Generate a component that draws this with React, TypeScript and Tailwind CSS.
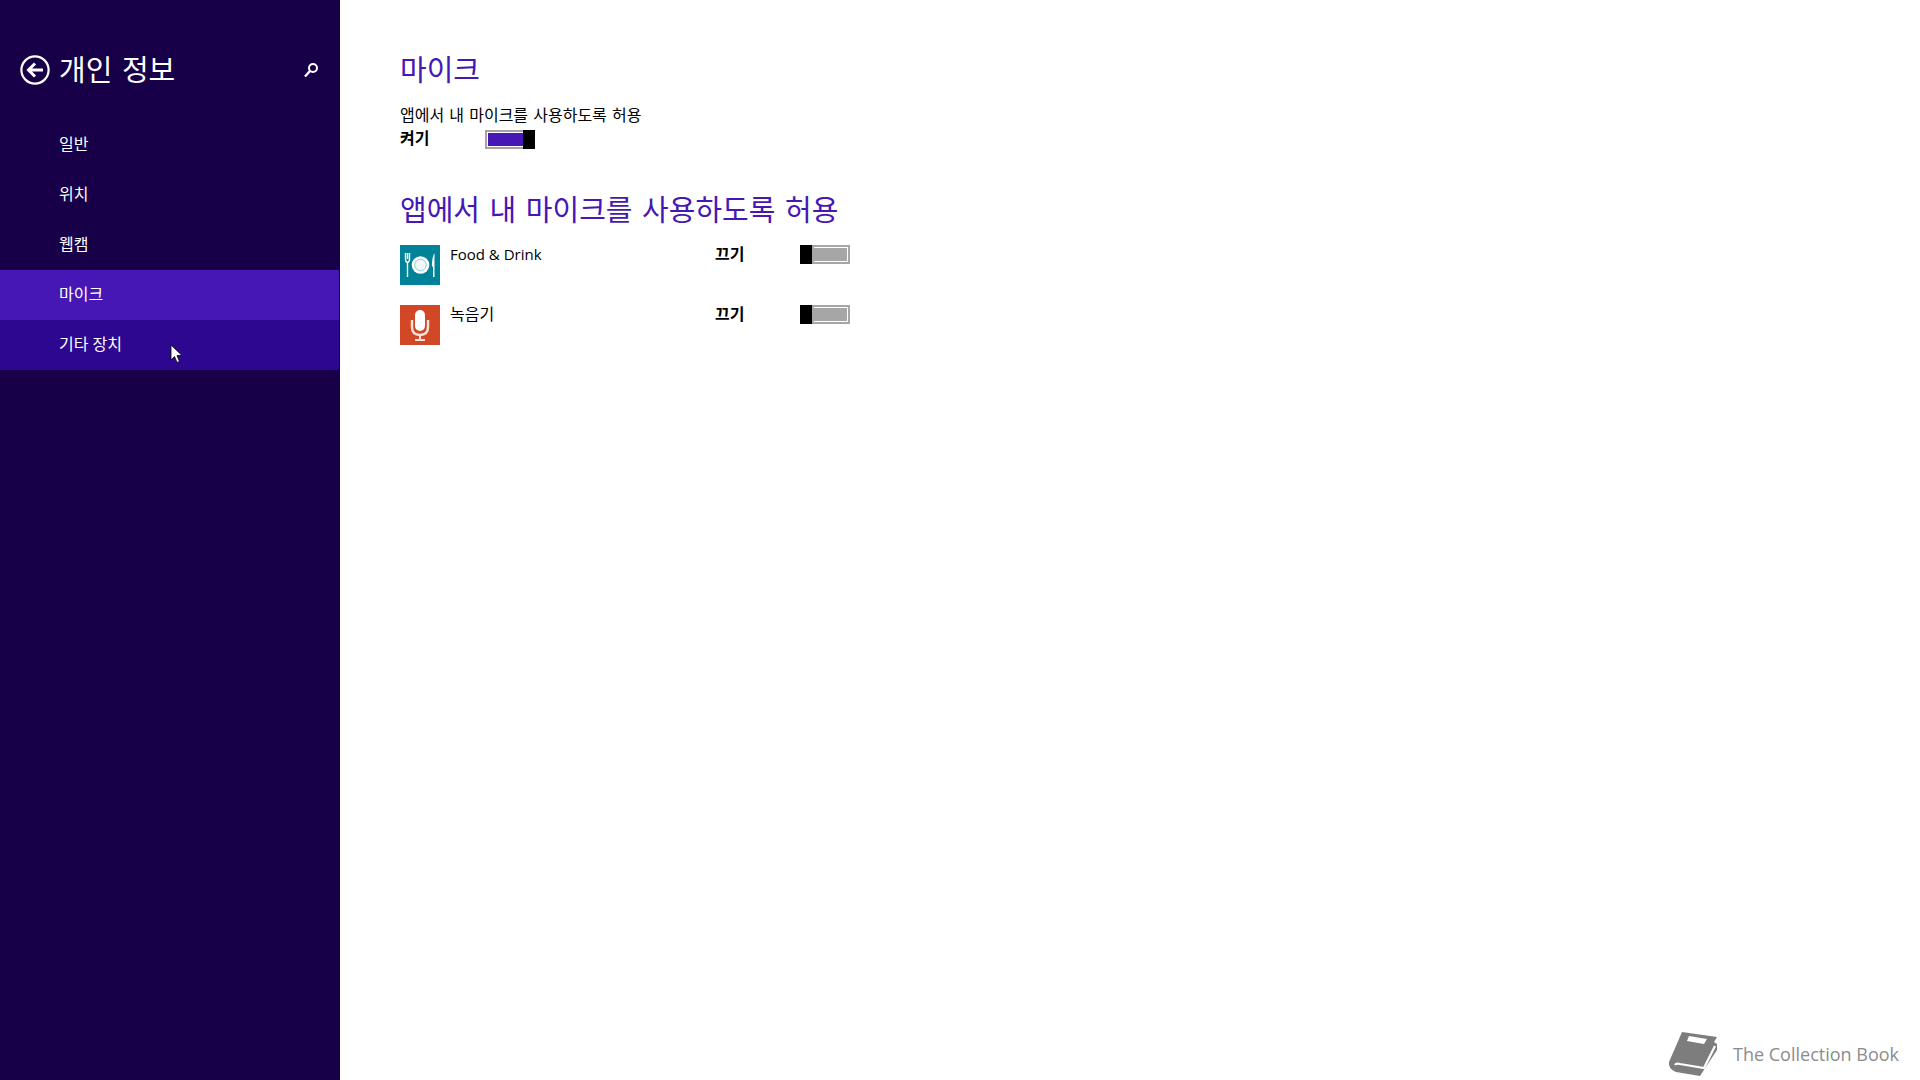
const FONT = "font-['Open_Sans','Noto_Sans_CJK_KR',sans-serif]";

const navItems = [
  { label: "일반", bg: "" },
  { label: "위치", bg: "" },
  { label: "웹캠", bg: "" },
  { label: "마이크", bg: "bg-[#4617b4]" },
  { label: "기타 장치", bg: "bg-[#2e0791]" },
];

function BackIcon() {
  return (
    <svg width="30" height="30" viewBox="0 0 30 30" fill="none" stroke="white" className="shrink-0">
      <circle cx="15" cy="15" r="13.6" strokeWidth="2.2" />
      <path d="M23 15H9M15 8.5L8.5 15L15 21.5" strokeWidth="3" />
    </svg>
  );
}

function SearchIcon() {
  return (
    <svg width="16" height="16" viewBox="0 0 16 16" fill="none" stroke="white">
      <circle cx="10" cy="6" r="4" strokeWidth="2" />
      <path d="M7 9L2 14.5" strokeWidth="2.4" />
    </svg>
  );
}

function PlateIcon() {
  return (
    <svg width="40" height="40" viewBox="0 0 40 40" fill="none" className="shrink-0 bg-[#008299]">
      <path d="M5.5 8V14Q5.5 17 7.5 17.5V32M7.5 8V14M9.5 8V14Q9.5 17 7.5 17.5" stroke="white" strokeWidth="1.4" />
      <circle cx="20.5" cy="20" r="8.8" fill="white" />
      <circle cx="20.5" cy="20" r="5.8" fill="#f2f8fa" stroke="#86c4d0" strokeWidth="0.9" />
      <path d="M34.5 8Q31.5 13 32 21L33 22V32H34.5Z" fill="white" />
    </svg>
  );
}

function MicIcon() {
  return (
    <svg width="40" height="40" viewBox="0 0 40 40" fill="none" className="shrink-0 bg-[#d24726]">
      <rect x="15" y="5" width="10" height="21" rx="5" fill="white" />
      <path d="M12 15V22Q12 30 20 30Q28 30 28 22V15" stroke="#fde3d8" strokeWidth="2.4" />
      <path d="M20 30V35M15 35H25" stroke="#fde3d8" strokeWidth="2" />
    </svg>
  );
}

function Toggle({ on }: { on: boolean }) {
  if (on) {
    return (
      <div className="w-[50px] h-[19px] flex">
        <div className="flex-1 border-2 border-r-0 border-[#a8a0a8] p-px pr-0 bg-white">
          <div className="h-full bg-[#4617b4]" />
        </div>
        <div className="w-3 bg-black" />
      </div>
    );
  }
  return (
    <div className="w-[50px] h-[19px] flex">
      <div className="w-3 bg-black" />
      <div className="flex-1 border-2 border-[#a6a6a6] bg-white p-px pl-0">
        <div className="h-full bg-[#a6a6a6]" />
      </div>
    </div>
  );
}

function AppRow({ icon, name, nameSize }: { icon: React.ReactNode; name: string; nameSize: string }) {
  return (
    <div className="flex h-10 w-[450px]">
      {icon}
      <div className={`ml-2.5 w-[265px] leading-[18px] text-black ${nameSize}`}>{name}</div>
      <div className="w-[85px] text-[16px] leading-[18px] font-bold text-black">끄기</div>
      <Toggle on={false} />
    </div>
  );
}

export default function App() {
  return (
    <div className={`relative h-screen w-full flex overflow-hidden bg-white ${FONT}`}>
      <aside className="w-[340px] shrink-0 bg-[#170048] text-white">
        <div className="h-[120px] pt-[55px] pl-5 pr-[21px] flex items-start">
          <BackIcon />
          <h2 className="ml-[9px] text-[29px] leading-[30px] flex-1 [word-spacing:2px]">개인 정보</h2>
          <div className="pt-[7px]">
            <SearchIcon />
          </div>
        </div>
        <nav>
          {navItems.map((item) => (
            <div key={item.label} className={`h-[50px] mr-px pl-[59px] pb-0.5 flex items-center text-[16px] ${item.bg}`}>
              {item.label}
            </div>
          ))}
        </nav>
      </aside>

      <main className="flex-1 pl-[60px] pt-[51px]">
        <h1 className="text-[29px] leading-[38px] text-[#4617b4]">마이크</h1>
        <p className="mt-[16px] text-[16px] leading-[20px] text-black [word-spacing:1px]">앱에서 내 마이크를 사용하도록 허용</p>
        <div className="mt-[5px] flex items-center h-[19px]">
          <span className="w-[85px] text-[16px] leading-[17px] pb-0.5 font-bold text-black">켜기</span>
          <Toggle on />
        </div>
        <h1 className="mt-[42px] text-[29px] leading-[38px] text-[#4617b4] [word-spacing:2px]">앱에서 내 마이크를 사용하도록 허용</h1>
        <div className="mt-[16px] flex flex-col gap-5">
          <AppRow icon={<PlateIcon />} name="Food & Drink" nameSize="text-[15px]" />
          <AppRow icon={<MicIcon />} name="녹음기" nameSize="text-[16px]" />
        </div>
      </main>

      {/* mouse pointer */}
      <svg width="13" height="20" viewBox="0 0 13 20" className="absolute left-[170px] top-[344px]">
        <path d="M1 1V16L4.5 12.5L7 18.5L9.5 17.5L7 11.5H12Z" fill="white" stroke="black" strokeWidth="0.8" />
      </svg>

      {/* watermark */}
      <div className="absolute right-[21px] bottom-[2px] flex items-center text-[#8c8c8c]">
        <svg width="52" height="48" viewBox="0 0 52 48" fill="none">
          <path d="M14 2L49 7L46 12L49 14V20L32 46L8 42Q0 39 1 32Z" fill="#7d7d7d" />
          <path d="M7 35Q8 33 12 34L36 38L47 16" stroke="white" strokeWidth="2.2" />
          <path d="M21 6L39 9L36 14L19 11Z" fill="white" />
        </svg>
        <span className="ml-[13px] text-[18px] leading-none">The Collection Book</span>
      </div>
    </div>
  );
}
